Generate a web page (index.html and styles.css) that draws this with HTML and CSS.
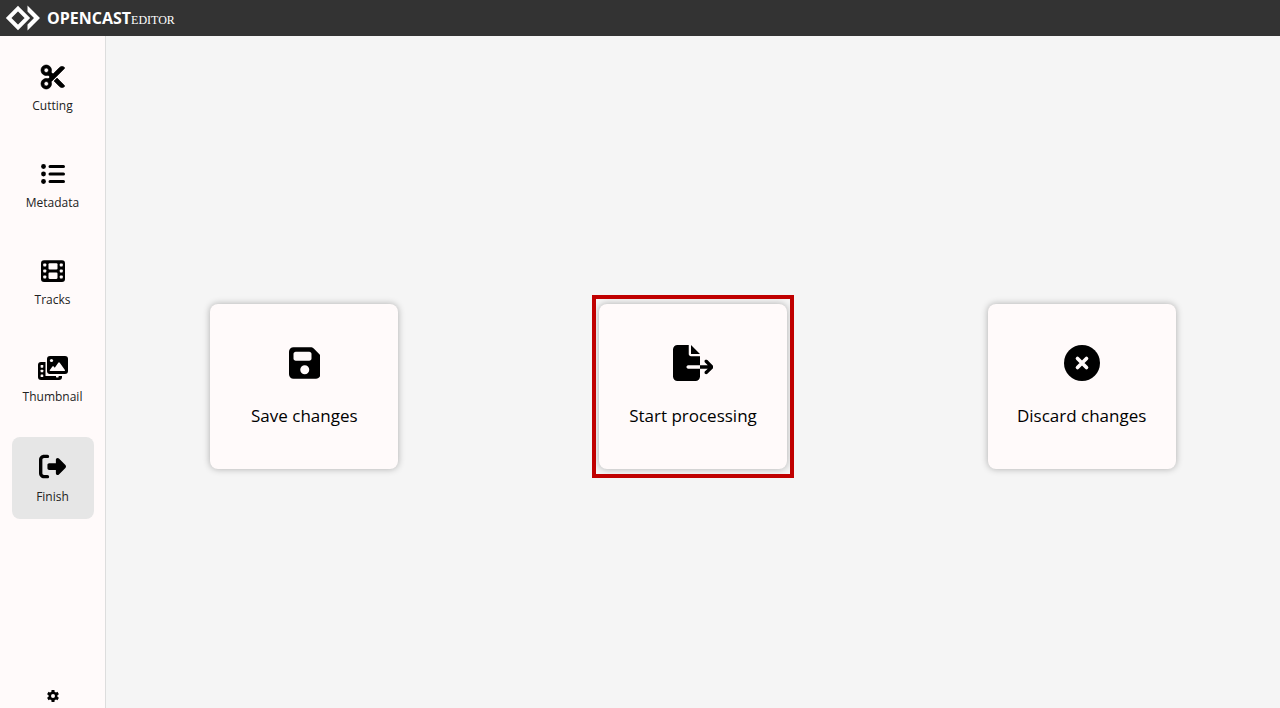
FILE: index.html
```html
<!DOCTYPE html>
<html lang="en">
<head>
    <meta charset="UTF-8">
    <meta name="viewport" content="width=device-width, initial-scale=1">
    <title>Opencast Editor</title>
    <link rel="stylesheet" href="styles.css">
</head>
<body>

<header class="header">
    <svg class="logo" viewBox="0 0 36 26" aria-hidden="true">
        <path d="M13 3.600L22.400 13L13 22.400L3.600 13z" fill="none" stroke="#fff" stroke-width="3.900"/>
        <path d="M22.500 .500L35 13L22.500 25.500V19.500L29 13L22.500 6.500z" fill="#fff"/>
    </svg>
    <span class="brand">OPENCAST</span><span class="product">EDITOR</span>
</header>

<div class="layout">
    <nav class="sidebar">
        <button class="nav-item" type="button">
            <svg class="nav-icon" viewBox="0 0 512 512" aria-hidden="true"><path stroke="#000" stroke-width="14" d="M256 192l-39.500-39.500c4.900-12.600 7.500-26.200 7.500-40.500C224 50.100 173.900 0 112 0S0 50.100 0 112s50.100 112 112 112c14.300 0 27.900-2.700 40.500-7.500L192 256l-39.500 39.500c-12.600-4.900-26.200-7.500-40.500-7.500C50.100 288 0 338.100 0 400s50.100 112 112 112s112-50.100 112-112c0-14.300-2.700-27.900-7.500-40.500L499.200 76.800c7.100-7.100 7.100-18.500 0-25.600c-28.300-28.300-74.100-28.300-102.400 0L256 192zm22.600 150.600L396.800 460.800c28.300 28.300 74.100 28.300 102.400 0c7.100-7.100 7.100-18.500 0-25.600L342.600 278.600l-64 64zM64 112a48 48 0 1 1 96 0 48 48 0 1 1 -96 0zm48 240a48 48 0 1 1 0 96 48 48 0 1 1 0-96z"/></svg>
            Cutting
        </button>
        <button class="nav-item" type="button">
            <svg class="nav-icon" viewBox="0 0 24 24" aria-hidden="true">
                <circle cx="2.500" cy="4.500" r="2.400"/><circle cx="2.500" cy="12" r="2.400"/><circle cx="2.500" cy="19.500" r="2.400"/>
                <path d="M9 4.500H22.500M9 12H22.500M9 19.500H22.500" stroke="#000" stroke-width="3" stroke-linecap="round"/>
            </svg>
            Metadata
        </button>
        <button class="nav-item" type="button">
            <svg class="nav-icon" viewBox="0 0 512 512" aria-hidden="true">
                <rect y="24" width="512" height="464" rx="64"/>
                <g class="hole">
                    <rect x="48" y="96" width="64" height="64" rx="16"/><rect x="48" y="224" width="64" height="64" rx="16"/><rect x="48" y="352" width="64" height="64" rx="16"/>
                    <rect x="400" y="96" width="64" height="64" rx="16"/><rect x="400" y="224" width="64" height="64" rx="16"/><rect x="400" y="352" width="64" height="64" rx="16"/>
                    <rect x="160" y="88" width="192" height="136" rx="24"/><rect x="160" y="288" width="192" height="136" rx="24"/>
                </g>
            </svg>
            Tracks
        </button>
        <button class="nav-item" type="button">
            <svg class="nav-icon nav-icon-wide" viewBox="0 0 640 512" aria-hidden="true">
                <rect y="128" width="512" height="384" rx="64"/>
                <g class="hole">
                    <rect x="56" y="192" width="56" height="56" rx="12"/><rect x="56" y="292" width="56" height="56" rx="12"/><rect x="56" y="392" width="56" height="56" rx="12"/>
                    <path d="M160 0H240V384H640V424H160z"/>
                    <rect x="384" y="408" width="56" height="48" rx="12"/>
                </g>
                <rect x="192" width="448" height="384" rx="64"/>
                <g class="hole">
                    <circle cx="288" cy="96" r="34"/>
                    <path d="M264 320q-24 0-12-22l56-76q12-16 26 0l24 30 74-110q16-20 32 0l110 154q12 24-14 24z"/>
                </g>
            </svg>
            Thumbnail
        </button>
        <button class="nav-item active" type="button" aria-current="page">
            <svg class="nav-icon" viewBox="0 0 512 512" aria-hidden="true"><path d="M377.900 105.900L500.700 228.700c7.200 7.200 11.300 17.100 11.300 27.300s-4.100 20.100-11.300 27.300L377.900 406.100c-6.400 6.400-15 9.900-24 9.900c-18.700 0-33.900-15.200-33.900-33.900l0-62.100-128 0c-17.700 0-32-14.300-32-32l0-64c0-17.700 14.300-32 32-32l128 0 0-62.100c0-18.700 15.200-33.900 33.900-33.900c9 0 17.600 3.600 24 9.900zM160 96L96 96c-17.700 0-32 14.300-32 32l0 256c0 17.700 14.300 32 32 32l64 0c17.700 0 32 14.300 32 32s-14.300 32-32 32l-64 0c-53 0-96-43-96-96L0 128C0 75 43 32 96 32l64 0c17.700 0 32 14.300 32 32s-14.300 32-32 32z"/></svg>
            Finish
        </button>
        <button class="settings" type="button" aria-label="Settings">
            <svg viewBox="0 0 24 24" aria-hidden="true">
                <circle cx="12" cy="12" r="6.500" fill="none" stroke="#000" stroke-width="5"/>
                <path d="M12 0V5M12 19V24M1.600 6L6 8.500M18 15.500L22.400 18M1.600 18L6 15.500M18 8.500L22.400 6" stroke="#000" stroke-width="6"/>
            </svg>
        </button>
    </nav>

    <main class="main">
        <button class="card" type="button">
            <svg class="card-icon" viewBox="0 0 448 512" aria-hidden="true"><path d="M64 32C28.700 32 0 60.700 0 96V416c0 35.300 28.700 64 64 64H384c35.300 0 64-28.700 64-64V173.300c0-17-6.700-33.300-18.700-45.300L352 50.700C340 38.700 323.700 32 306.700 32H64zm0 96c0-17.700 14.300-32 32-32H288c17.700 0 32 14.300 32 32v64c0 17.700-14.300 32-32 32H96c-17.700 0-32-14.300-32-32V128zM224 288a64 64 0 1 1 0 128 64 64 0 1 1 0-128z"/></svg>
            Save changes
        </button>
        <button class="card highlighted" type="button">
            <svg class="card-icon" viewBox="0 0 576 512" aria-hidden="true"><path d="M0 64C0 28.700 28.700 0 64 0H224V128c0 17.700 14.300 32 32 32H384V288H216c-13.300 0-24 10.700-24 24s10.700 24 24 24H384V448c0 35.300-28.700 64-64 64H64c-35.300 0-64-28.700-64-64V64zM384 336V288H494.100l-39-39c-9.400-9.400-9.400-24.600 0-33.900s24.600-9.400 33.900 0l80 80c9.400 9.400 9.400 24.600 0 33.900l-80 80c-9.400 9.400-24.600 9.400-33.900 0s-9.400-24.600 0-33.900l39-39H384zm0-208H256V0L384 128z"/></svg>
            Start processing
        </button>
        <button class="card" type="button">
            <svg class="card-icon" viewBox="0 0 512 512" aria-hidden="true">
                <circle cx="256" cy="256" r="256"/>
                <path class="cross" d="M192 192L320 320M320 192L192 320"/>
            </svg>
            Discard changes
        </button>
    </main>
</div>

</body>
</html>
```
FILE: styles.css
```css
* {
  box-sizing: border-box;
}
body {
  margin: 0;
  min-height: 100vh;
  display: flex;
  flex-direction: column;
  font-family: "Segoe UI", "Open Sans", sans-serif;
  background: #f5f5f5;
  color: #000;
}
button {
  font: inherit;
  color: inherit;
  border: 0;
  padding: 0;
  cursor: pointer;
}
.header {
  display: flex;
  align-items: center;
  height: 36px;
  padding-left: 5px;
  background: #333;
  color: #fff;
}
.logo {
  width: 36px;
  height: 26px;
  margin-right: 6px;
}
.brand {
  font-size: 16px;
  font-weight: 700;
  line-height: 24px;
}
.product {
  font-family: "Liberation Serif", serif;
  font-size: 12px;
  line-height: 12px;
  padding-top: 4px;
}
.layout {
  flex: 1;
  display: flex;
}
.sidebar {
  display: flex;
  flex-direction: column;
  align-items: center;
  gap: 15px;
  width: 106px;
  padding: 13px 0 6px;
  background: #fffafa;
  border-right: 1px solid #ddd;
}
.nav-item {
  display: flex;
  flex-direction: column;
  align-items: center;
  gap: 9px;
  width: 82px;
  height: 82px;
  padding-top: 16px;
  border-radius: 8px;
  background: none;
  color: #222;
  font-size: 12px;
  line-height: 16px;
}
.nav-item.active {
  background: #e6e6e6;
}
.nav-icon {
  height: 24px;
  fill: #000;
  overflow: visible;
}
.nav-icon-wide {
  width: 30px;
}
.active .nav-icon {
  height: 27px;
}
.hole {
  fill: #fffafa;
}
.settings {
  display: flex;
  margin-top: auto;
  background: none;
}
.settings svg {
  width: 12px;
  height: 12px;
}
.main {
  flex: 1;
  display: flex;
  align-items: center;
  justify-content: space-around;
  padding: 29px 4px 0;
}
.card {
  position: relative;
  display: flex;
  flex-direction: column;
  align-items: center;
  gap: 23px;
  width: 188px;
  height: 165px;
  padding-top: 41px;
  border-radius: 8px;
  background: #fffafa;
  box-shadow: 0 0 7px rgba(0, 0, 0, 0.3);
  font-size: 17px;
  line-height: 24px;
}
.card-icon {
  height: 36px;
}
.cross {
  stroke: #fffafa;
  stroke-width: 52;
  stroke-linecap: round;
}
/* red marker drawn around the card */
.highlighted::after {
  content: "";
  position: absolute;
  inset: -9px -7px;
  border: 4px solid #c00000;
}
```
